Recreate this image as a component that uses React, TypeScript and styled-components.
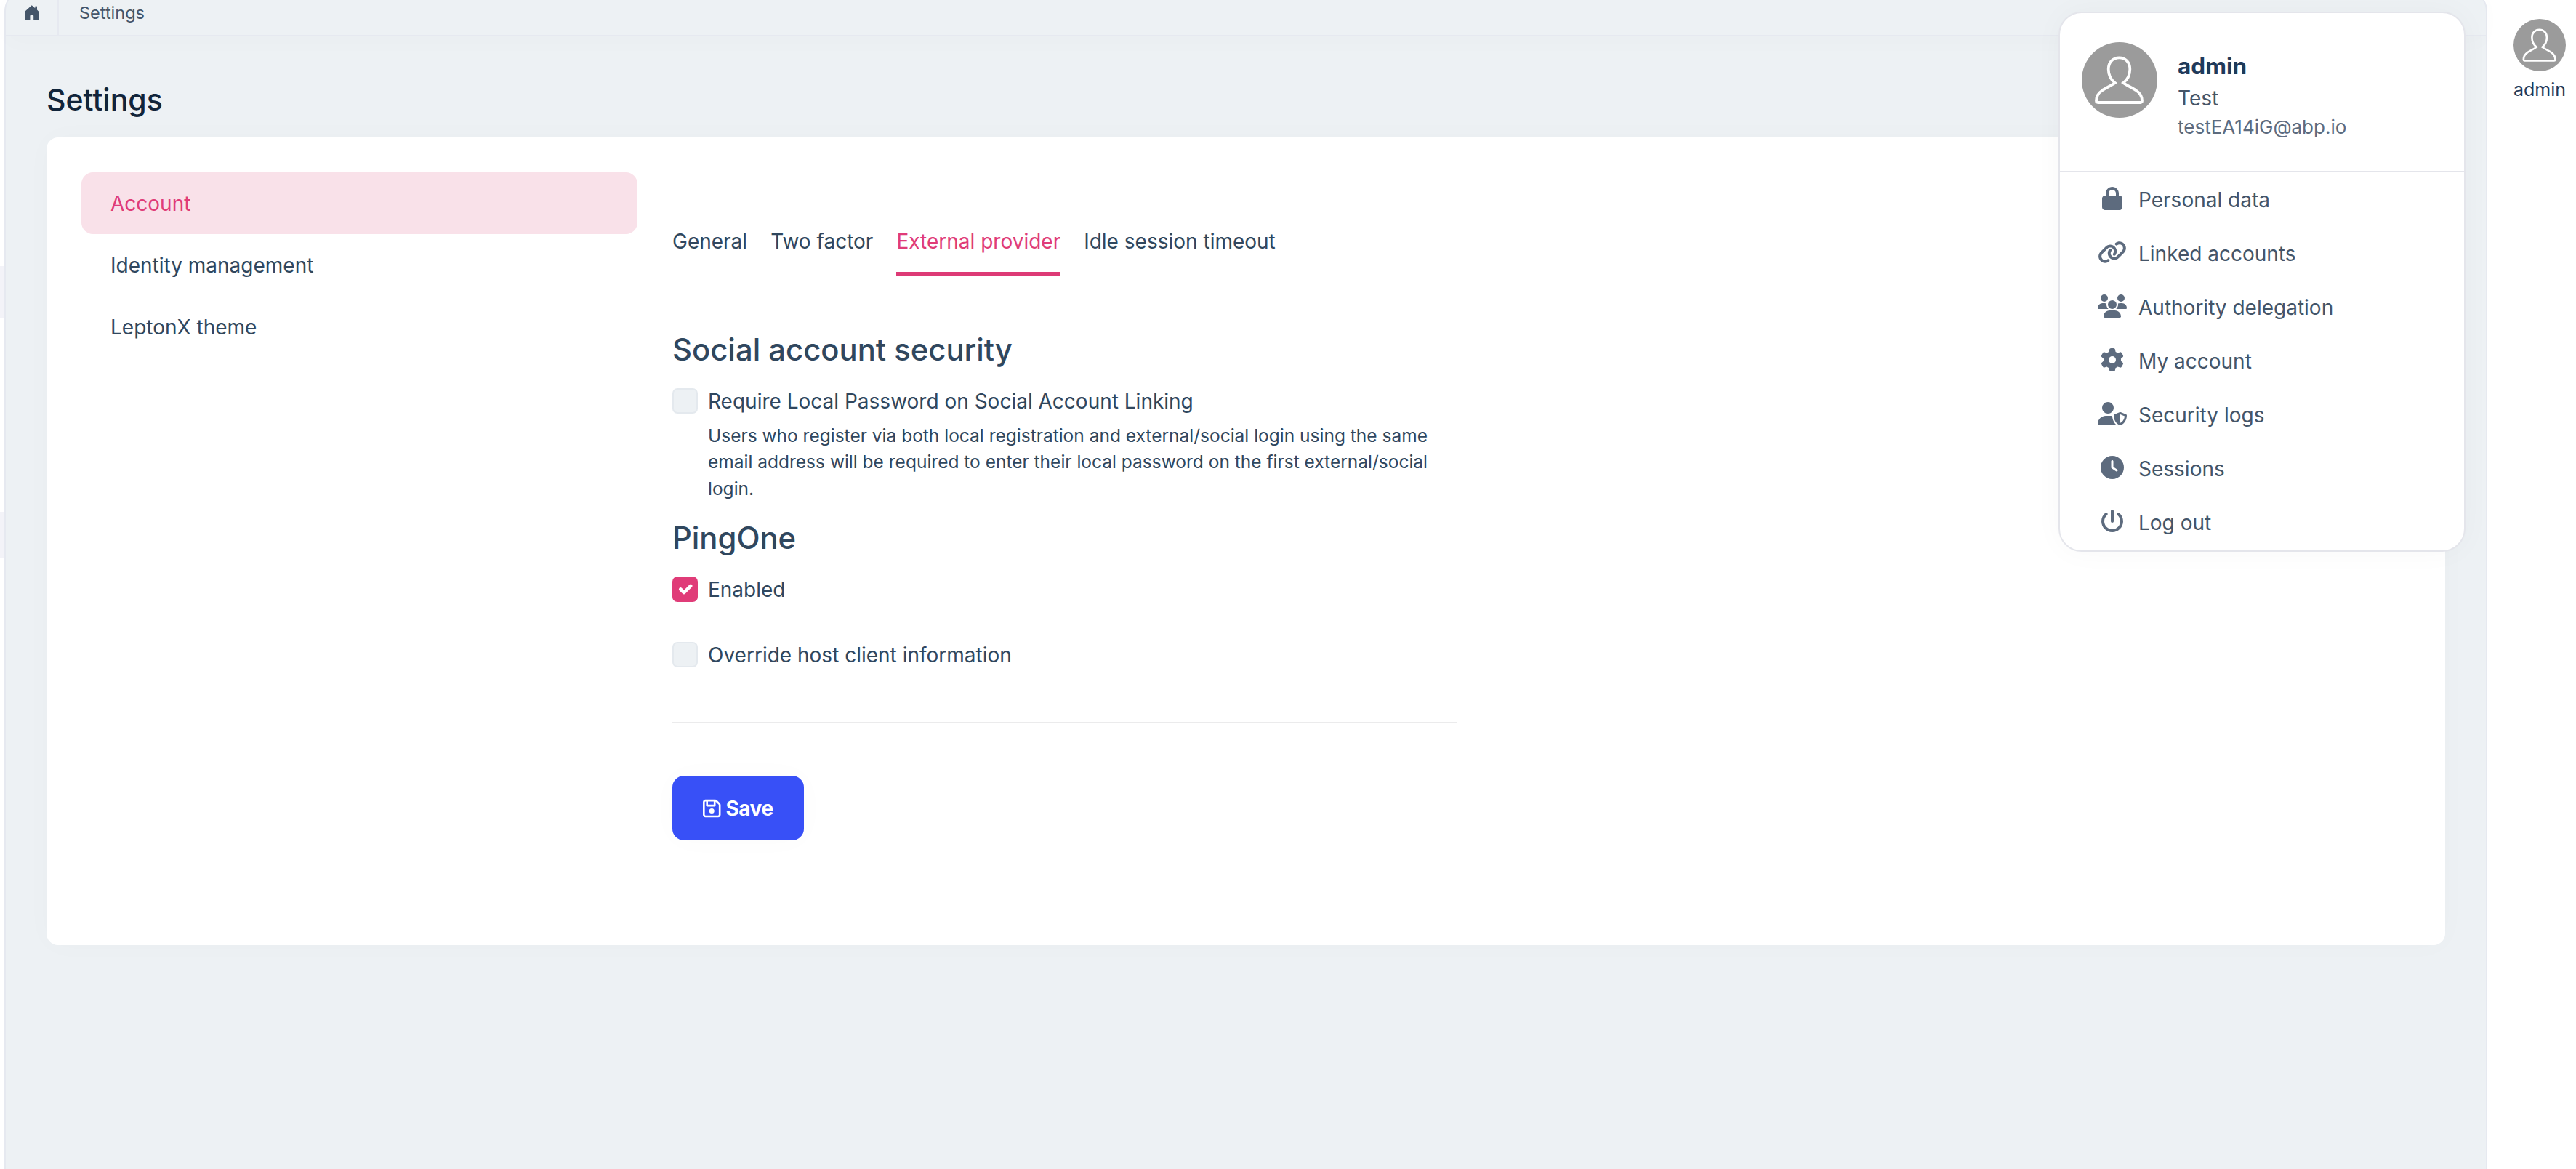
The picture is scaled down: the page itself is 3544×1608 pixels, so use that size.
import styled, { createGlobalStyle } from "styled-components";
import type { IconType } from "react-icons";
import {
  FaLock,
  FaLink,
  FaUsers,
  FaGear,
  FaUserShield,
  FaClock,
  FaPowerOff,
  FaRegFloppyDisk,
} from "react-icons/fa6";
import { useState } from "react";

const GlobalStyle = createGlobalStyle`
  * {
    box-sizing: border-box;
  }

  body {
    margin: 0;
    background: #fff;
    color: #30475e;
    font-family: Inter, "Liberation Sans", sans-serif;
    font-size: 28px;
    line-height: 42px;
    overflow: hidden;
  }

  button {
    font-family: inherit;
    border: none;
    cursor: pointer;
  }
`;

const Shell = styled.div`
  display: flex;
  height: 1608px;
  overflow: hidden;
`;

const Sidebar = styled.div`
  width: 6px;
  display: flex;
  flex-direction: column;
  gap: 266px;
  padding-top: 366px;
`;

const SidebarMark = styled.div<{ $height: number }>`
  height: ${({ $height }) => $height}px;
  background: #f3f3f8;
`;

const Main = styled.main`
  width: 3416px;
  height: 1660px;
  margin-top: -16px;
  border: 2px solid #e6e9f0;
  border-radius: 32px;
  background: #edf1f4;
`;

const TopBar = styled.div`
  display: flex;
  height: 64px;
  padding-top: 14px;
  border-bottom: 2px solid #e6e9f0;
  box-shadow: 0 10px 30px rgba(0, 0, 0, 0.015);
`;

const HomeCell = styled.div`
  display: flex;
  justify-content: center;
  width: 73px;
  padding: 7px 0 0;
  border-right: 2px solid #e6e9f0;
  color: #445569;
`;

const Crumb = styled.span`
  padding-left: 28px;
  color: #445569;
  font-size: 23.5px;
  line-height: 36px;
`;

const Content = styled.div`
  padding: 63px 56px 0;
`;

const PageTitle = styled.h1`
  margin: 0;
  color: #11243a;
  font-size: 41px;
  font-weight: 500;
  line-height: 48px;
`;

const Card = styled.section`
  display: flex;
  gap: 48px;
  width: 3300px;
  height: 1111px;
  margin-top: 28px;
  padding: 48px;
  border-radius: 16px;
  background: #fff;
  box-shadow: 0 0 40px rgba(0, 0, 0, 0.02);
`;

const SideNav = styled.nav`
  width: 765px;
`;

const SideNavItem = styled.div<{ $active: boolean }>`
  display: flex;
  align-items: center;
  height: 85px;
  padding: 0 40px;
  border-radius: 16px;
  background: ${({ $active }) => ($active ? "#f9e1e9" : "transparent")};
  color: ${({ $active }) => ($active ? "#e03c78" : "#30475e")};
  cursor: pointer;
`;

const Panel = styled.div`
  width: 1080px;
  padding-top: 48px;
`;

const TabList = styled.div`
  display: flex;
  gap: 32px;
`;

const Tab = styled.div<{ $active: boolean }>`
  height: 95px;
  padding-top: 26px;
  border-bottom: 6px solid ${({ $active }) => ($active ? "#dd3a76" : "transparent")};
  color: ${({ $active }) => ($active ? "#e03c78" : "#30475e")};
  cursor: pointer;
`;

const SectionTitle = styled.h3`
  margin: 0;
  font-size: 41.8px;
  font-weight: 500;
  line-height: 50px;
`;

const CheckRow = styled.label`
  display: flex;
  gap: 14px;
  cursor: pointer;
`;

const CheckBox = styled.span<{ $checked: boolean }>`
  display: flex;
  align-items: center;
  justify-content: center;
  flex: none;
  width: 35px;
  height: 35px;
  margin-top: 4px;
  border: 2px solid ${({ $checked }) => ($checked ? "#e03c78" : "#e4e9ee")};
  border-radius: 7px;
  background: ${({ $checked }) => ($checked ? "#e03c78" : "#edf1f4")};
`;

const CheckLabel = styled.span`
  padding-top: 1px;
`;

const HelpText = styled.p`
  width: 1020px;
  margin: 8px 0 25px 49px;
  font-size: 24.5px;
  line-height: 36.4px;
`;

const Group = styled.div<{ $top: number }>`
  padding-top: ${({ $top }) => $top}px;
`;

const Divider = styled.hr`
  height: 2px;
  margin: 71px 0 72px;
  border: none;
  background: #ebebec;
`;

const SaveButton = styled.button`
  display: flex;
  align-items: center;
  gap: 7px;
  height: 89px;
  padding: 0 42px;
  border-radius: 16px;
  background: #3850f7;
  color: #fff;
  font-size: 28px;
  font-weight: 700;
  letter-spacing: -0.5px;
  box-shadow: 0 0 40px rgba(0, 0, 0, 0.02);

  svg {
    width: 24.5px;
    height: 28px;
  }
`;

const UserBar = styled.aside`
  display: flex;
  flex-direction: column;
  align-items: center;
  width: 122px;
  padding: 26px 0 0 22px;
`;

const UserBarName = styled.div`
  margin-top: 4px;
  color: #1f3a5a;
  font-size: 25px;
`;

const UserMenu = styled.div`
  position: absolute;
  top: 16px;
  left: 2832px;
  width: 560px;
  height: 743px;
  border: 2px solid #e4e5eb;
  border-radius: 32px;
  background: #fff;
  box-shadow: 0 0 40px rgba(0, 0, 0, 0.03);
`;

const UserHead = styled.div`
  display: flex;
  gap: 28px;
  height: 217px;
  padding: 40px 30px 0;
`;

const UserInfo = styled.div`
  padding-top: 12px;
`;

const UserName = styled.div`
  margin-bottom: 2px;
  color: #1f3a5a;
  font-size: 31.5px;
  font-weight: 700;
`;

const Tenant = styled.div`
  color: #445569;
`;

const Email = styled.div`
  margin-top: -2px;
  color: #5d6b7e;
  font-size: 26px;
`;

const MenuList = styled.div`
  border-top: 2px solid #e4e5eb;
`;

const MenuItem = styled.div`
  display: flex;
  align-items: center;
  height: 74px;
  padding: 2px 0 0 52px;
  color: #445569;
  cursor: pointer;
`;

const MenuIcon = styled.span`
  display: flex;
  width: 40px;
  margin-right: 16px;
  padding-bottom: 4px;
  color: #5d6b7e;

  svg {
    width: 40px;
    height: 32px;
  }
`;

const navItems = ["Account", "Identity management", "LeptonX theme"];
const tabs = ["General", "Two factor", "External provider", "Idle session timeout"];

const menuItems: { label: string; icon: IconType }[] = [
  { label: "Personal data", icon: FaLock },
  { label: "Linked accounts", icon: FaLink },
  { label: "Authority delegation", icon: FaUsers },
  { label: "My account", icon: FaGear },
  { label: "Security logs", icon: FaUserShield },
  { label: "Sessions", icon: FaClock },
  { label: "Log out", icon: FaPowerOff },
];

function Avatar({ size }: { size: number }) {
  return (
    <svg width={size} height={size} viewBox="0 0 104 104">
      <circle cx="52" cy="52" r="52" fill="#9b9b9b" />
      <path
        d="M51.5 21.3C43 21.3 36.7 27.5 36.7 37C36.7 46 40.5 52 45.8 56C40 60 33 63 28 66.5C22 70.5 20 76 20 80.5C20 82 21 83 22.5 83H80.5C82 83 83 82 83 80.5C83 76 81 70.5 75 66.5C70 63 63 60 57.2 56C62.5 52 66.3 46 66.3 37C66.3 27.5 60 21.3 51.5 21.3Z"
        fill="none"
        stroke="#fff"
        strokeWidth="3.8"
      />
    </svg>
  );
}

function HomeIcon() {
  return (
    <svg width="20" height="21" viewBox="0 0 20 21" fill="currentColor">
      <path d="M9.700 0.300L14.300 4.300V2.200Q14.300 1.500 15 1.500H16.300Q17 1.500 17 2.200V6.600L19.200 8.700V19.800Q19.200 20.600 18.400 20.600H12.200V14.800Q12.200 14 11.400 14H8.200Q7.400 14 7.400 14.800V20.600H1.100Q0.300 20.600 0.300 19.800V8.700Z" />
    </svg>
  );
}

function Check({ label, initial = false }: { label: string; initial?: boolean }) {
  const [checked, setChecked] = useState<boolean>(initial);
  return (
    <CheckRow onClick={() => setChecked(!checked)}>
      <CheckBox $checked={checked}>
        {checked && (
          <svg width="31" height="31" viewBox="0 0 20 20" fill="none">
            <path d="M6 10l3 3 6-6" stroke="#fff" strokeWidth="3" strokeLinecap="round" strokeLinejoin="round" />
          </svg>
        )}
      </CheckBox>
      <CheckLabel>{label}</CheckLabel>
    </CheckRow>
  );
}

function App() {
  const [activeNav, setActiveNav] = useState("Account");
  const [activeTab, setActiveTab] = useState("External provider");

  return (
    <>
      <GlobalStyle />
      <Shell>
        <Sidebar>
          <SidebarMark $height={72} />
          <SidebarMark $height={64} />
        </Sidebar>
        <Main>
          <TopBar>
            <HomeCell>
              <HomeIcon />
            </HomeCell>
            <Crumb>Settings</Crumb>
          </TopBar>
          <Content>
            <PageTitle>Settings</PageTitle>
            <Card>
              <SideNav>
                {navItems.map((item) => (
                  <SideNavItem key={item} $active={item === activeNav} onClick={() => setActiveNav(item)}>
                    {item}
                  </SideNavItem>
                ))}
              </SideNav>
              <Panel>
                <TabList>
                  {tabs.map((tab) => (
                    <Tab key={tab} $active={tab === activeTab} onClick={() => setActiveTab(tab)}>
                      {tab}
                    </Tab>
                  ))}
                </TabList>
                <Group $top={76}>
                  <SectionTitle>Social account security</SectionTitle>
                </Group>
                <Group $top={24}>
                  <Check label="Require Local Password on Social Account Linking" />
                  <HelpText>
                    Users who register via both local registration and external/social login using the same email
                    address will be required to enter their local password on the first external/social login.
                  </HelpText>
                  <SectionTitle>PingOne</SectionTitle>
                </Group>
                <Group $top={24}>
                  <Check label="Enabled" initial />
                </Group>
                <Group $top={47}>
                  <Check label="Override host client information" />
                </Group>
                <Divider />
                <SaveButton>
                  <FaRegFloppyDisk />
                  Save
                </SaveButton>
              </Panel>
            </Card>
          </Content>
        </Main>
        <UserBar>
          <Avatar size={72} />
          <UserBarName>admin</UserBarName>
        </UserBar>
      </Shell>
      <UserMenu>
        <UserHead>
          <Avatar size={104} />
          <UserInfo>
            <UserName>admin</UserName>
            <Tenant>Test</Tenant>
            <Email>testEA14iG@abp.io</Email>
          </UserInfo>
        </UserHead>
        <MenuList>
          {menuItems.map(({ label, icon: Icon }) => (
            <MenuItem key={label}>
              <MenuIcon>
                <Icon />
              </MenuIcon>
              {label}
            </MenuItem>
          ))}
        </MenuList>
      </UserMenu>
    </>
  );
}

export default App;
